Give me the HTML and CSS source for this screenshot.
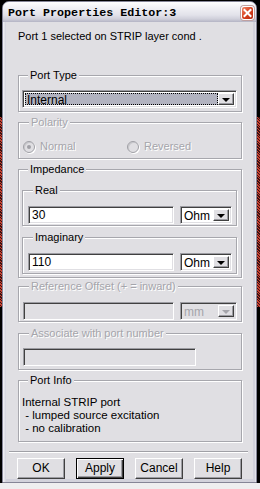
FILE: index.html
```html
<!DOCTYPE html>
<html>
<head>
<meta charset="utf-8">
<link rel="stylesheet" href="styles.css">
</head>
<body>
<div class="screen">
  <div class="window">
    <div class="titlebar">
      <span class="title">Port Properties Editor:3</span>
      <span class="close"><svg width="13" height="14" viewBox="0 0 13 14"><path d="M3.5 4 L9.5 10 M9.5 4 L3.5 10" stroke="#fff" stroke-width="2" stroke-linecap="square"/></svg></span>
    </div>
    <div class="client">
      <p class="status">Port 1 selected on STRIP layer cond .</p>

      <div class="group g-porttype">
        <div class="legend">Port Type</div>
        <div class="combo combo-wide">
          <div class="combo-text selected"><span class="focus">Internal</span></div>
          <div class="drop"><span class="tri"></span></div>
        </div>
      </div>

      <div class="group g-polarity">
        <div class="legend disabled">Polarity</div>
        <div class="radios">
          <div class="radio-item"><span class="radio checked"></span><span class="disabled">Normal</span></div>
          <div class="radio-item"><span class="radio"></span><span class="disabled">Reversed</span></div>
        </div>
      </div>

      <div class="group g-impedance">
        <div class="legend">Impedance</div>
        <div class="sub sub-real">
          <div class="legend">Real</div>
          <div class="row">
            <div class="field f-value">30</div>
            <div class="combo combo-unit">
              <div class="combo-text">Ohm</div>
              <div class="drop"><span class="tri"></span></div>
            </div>
          </div>
        </div>
        <div class="sub sub-imag">
          <div class="legend">Imaginary</div>
          <div class="row">
            <div class="field f-value">110</div>
            <div class="combo combo-unit">
              <div class="combo-text">Ohm</div>
              <div class="drop"><span class="tri"></span></div>
            </div>
          </div>
        </div>
      </div>

      <div class="group g-offset">
        <div class="legend disabled">Reference Offset (+ = inward)</div>
        <div class="row row-offset">
          <div class="field f-offset off"></div>
          <div class="combo combo-mm off">
            <div class="combo-text disabled-plain">mm</div>
            <div class="drop"><span class="tri tri-off"></span></div>
          </div>
        </div>
      </div>

      <div class="group g-assoc">
        <div class="legend disabled">Associate with port number</div>
        <div class="field f-assoc off"></div>
      </div>

      <div class="group g-info">
        <div class="legend">Port Info</div>
        <div class="info">Internal STRIP port<br>&nbsp;- lumped source excitation<br>&nbsp;- no calibration</div>
      </div>

      <div class="separator"></div>

      <div class="buttons">
        <div class="btn">OK</div>
        <div class="btn default">Apply</div>
        <div class="btn">Cancel</div>
        <div class="btn">Help</div>
      </div>
    </div>
  </div>
</div>
</body>
</html>
```

FILE: styles.css
```css
* { box-sizing: border-box; }
html, body { margin: 0; padding: 0; }
body {
  width: 260px;
  height: 489px;
  overflow: hidden;
  background:
    linear-gradient(#000, #000) 0 0 / 100% 483px no-repeat,
    #eeeef0;
  font-family: "Liberation Sans", Arial, sans-serif;
  font-size: 11px;
  color: #000;
}
.screen {
  padding: 1px 0 0 2px;
  position: relative;
}
.screen::before {
  content: "";
  position: absolute;
  left: 0; top: 117px;
  width: 2px; height: 190px;
  background: repeating-linear-gradient(45deg, #c84030 0 1px, #3a1010 1px 2px);
}
.screen::after {
  content: "";
  position: absolute;
  right: 0; top: 117px;
  width: 3px; height: 190px;
  background: repeating-linear-gradient(45deg, #c84030 0 1px, #3a1010 1px 2px);
}
.window {
  width: 255px;
  height: 482px;
  border: 1px solid #858597;
  border-radius: 7px 7px 0 0;
  background: linear-gradient(90deg, #f4f4f8 0, #d2d2dc 3px, #d2d2dc 252px, #f4f4f8 253px);
  display: flex;
  flex-direction: column;
  overflow: hidden;
  position: relative;
  z-index: 1;
}
.titlebar {
  height: 20px;
  flex: none;
  display: flex;
  align-items: center;
  padding: 0 0 0 5px;
  background: linear-gradient(#ffffff 0, #f0f0f4 30%, #e2e2ea 65%, #cfcfda 85%, #b4b4c4 100%);
}
.title {
  font-family: "Liberation Mono", "Courier New", monospace;
  font-weight: bold;
  font-size: 11.7px;
  letter-spacing: 0;
  color: #000;
  flex: 1;
  padding-top: 1px;
}
.close {
  width: 13px;
  height: 14px;
  margin-right: 2px;
  margin-top: 2px;
  border: 1px solid #fff;
  border-radius: 3px;
  background: linear-gradient(135deg, #f08a6c, #d8401e 50%, #b82a10);
  display: flex;
  box-shadow: 0 0 0 1px #c0a0a0;
}
.close svg { display: block; margin: -1px; }
.client {
  flex: 1;
  margin: 0 3px 3px 3px;
  background: #e0dfe3;
  padding: 0 11px 0 12px;
  display: flex;
  flex-direction: column;
}
.status {
  margin: 8px 0 0 0;
  line-height: 13px;
  height: 13px;
}
.group {
  border: 1px solid #a7a7ad;
  box-shadow: inset 1px 1px 0 #fff, 1px 1px 0 #fff;
  display: flex;
  flex-direction: column;
}
.legend {
  margin: -7px 0 0 6px;
  padding: 0 2px;
  line-height: 13px;
  height: 13px;
  background: #e0dfe3;
  align-self: flex-start;
  white-space: nowrap;
}
.sub .legend { margin-left: 5px; }
.disabled {
  color: #a5a5ab;
  text-shadow: 1px 1px 0 #fff;
}
.g-porttype { margin-top: 32px; padding: 0 4px 3px 3px; }
.g-porttype .combo { margin-top: 8px; }
.g-polarity { margin-top: 10px; padding: 0 0 5px 4px; }
.radios {
  margin-top: 11px;
  display: grid;
  grid-template-columns: 104px auto;
  height: 13px;
}
.radio-item {
  display: flex;
  align-items: center;
  gap: 5px;
  line-height: 13px;
}
.radio {
  width: 12px;
  height: 12px;
  border-radius: 50%;
  border: 1px solid #a0a0a6;
  box-shadow: inset 1px 1px 0 #c8c8cc, 1px 1px 0 #fff;
  background: #e0dfe3;
  position: relative;
  flex: none;
}
.radio.checked::after {
  content: "";
  position: absolute;
  left: 3px; top: 3px;
  width: 4px; height: 4px;
  border-radius: 50%;
  background: #a0a0a6;
}
.g-impedance { margin-top: 10px; padding: 0 4px 3px 3px; }
.sub {
  border: 1px solid #a7a7ad;
  box-shadow: inset 1px 1px 0 #fff, 1px 1px 0 #fff;
  display: flex;
  flex-direction: column;
  padding: 0 4px 0 5px;
}
.sub-real { margin-top: 14px; padding-bottom: 1px; }
.sub-imag { margin-top: 11px; padding-bottom: 2px; }
.sub .row { margin-top: 9px; }
.row { display: flex; gap: 6px; }
.field {
  height: 18px;
  background: #fff;
  border: 1px solid;
  border-color: #9c9ca2 #fff #fff #9c9ca2;
  box-shadow: inset 1px 1px 0 #404040, inset -1px -1px 0 #e0dfe3;
  padding: 0 3px;
  line-height: 16px;
  font-size: 12px;
}
.field.off { background: #e0dfe3; }
.f-value { width: 146px; }
.combo {
  height: 18px;
  border: 1px solid;
  border-color: #9c9ca2 #fff #fff #9c9ca2;
  box-shadow: inset 1px 1px 0 #404040, inset -1px -1px 0 #e0dfe3;
  background: #fff;
  display: flex;
  padding: 2px;
}
.combo.off { background: #e0dfe3; }
.combo-wide { width: 215px; }
.combo-unit { width: 52px; }
.combo-mm { width: 57px; }
.combo-text {
  flex: 1;
  line-height: 14px;
  padding-left: 1px;
  font-size: 12px;
}
.combo-text.selected {
  background: #b2b3c0;
  padding: 0;
  display: flex;
}
.focus {
  flex: 1;
  border: 1px dotted #000;
  line-height: 12px;
  padding-left: 1px;
}
.disabled-plain { color: #a5a5ab; }
.drop {
  width: 16px;
  flex: none;
  background: #e0dfe3;
  border: 1px solid;
  border-color: #fff #404040 #404040 #fff;
  box-shadow: inset -1px -1px 0 #9c9ca2;
  display: flex;
  align-items: center;
  justify-content: center;
}
.tri {
  width: 0; height: 0;
  border-left: 4px solid transparent;
  border-right: 4px solid transparent;
  border-top: 4px solid #000;
  margin-top: 1px;
}
.tri-off { border-top-color: #a5a5ab; }
.g-offset { margin-top: 8px; padding: 0 4px 1px 4px; }
.row-offset { margin-top: 9px; }
.f-offset { width: 151px; }
.g-assoc { margin-top: 11px; padding: 0 0 3px 4px; }
.f-assoc { width: 173px; margin-top: 8px; }
.g-info { margin-top: 10px; padding: 0 0 6px 3px; }
.info {
  margin-top: 9px;
  line-height: 13px;
  font-size: 11.5px;
}
.separator {
  margin: 9px -6px 0 -9px;
  height: 2px;
  border-top: 1px solid #a0a0a6;
  border-bottom: 1px solid #fff;
}
.buttons {
  margin: 5px 0 0 -1px;
  display: flex;
  gap: 11px;
}
.btn {
  width: 48px;
  height: 21px;
  border: 1px solid;
  border-color: #fff #404040 #404040 #fff;
  box-shadow: inset -1px -1px 0 #9c9ca2;
  background: #e0dfe3;
  text-align: center;
  line-height: 18px;
  font-size: 12px;
}
.btn.default {
  border: 1px solid #000;
  box-shadow: inset 1px 1px 0 #fff, inset -1px -1px 0 #404040, inset -2px -2px 0 #9c9ca2;
}
```
